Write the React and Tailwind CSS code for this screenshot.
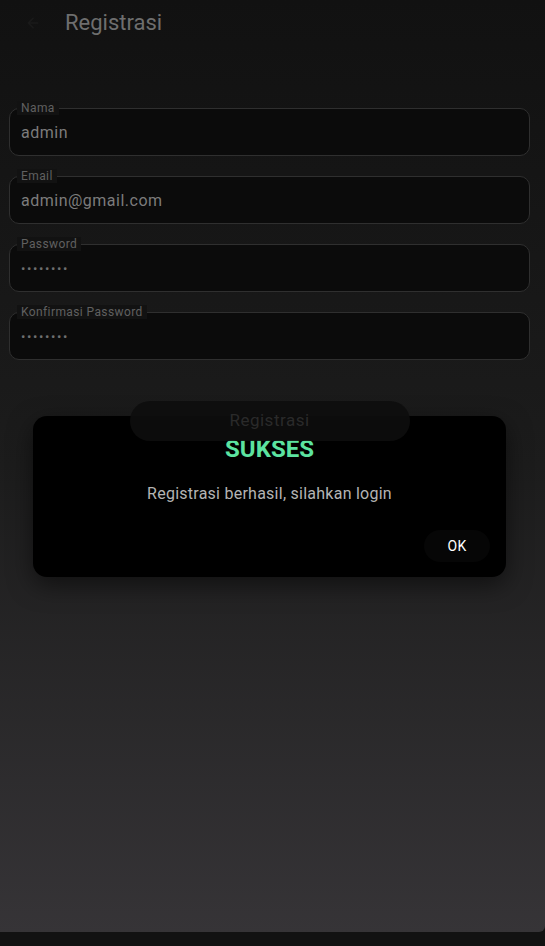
export default function App() {
  const fields = [
    { label: "Nama", value: "admin" },
    { label: "Email", value: "admin@gmail.com" },
    { label: "Password", value: "••••••••", pw: true },
    { label: "Konfirmasi Password", value: "••••••••", pw: true },
  ];
  return (
    <div className="relative w-[545px] h-[946px] bg-[#121212] overflow-hidden" style={{ fontFamily: "Roboto, 'Noto Sans', sans-serif" }}>
      <div className="h-[932px] bg-gradient-to-b from-[#111111] via-[#1c1c1c] to-[#363437] rounded-br-[6px] flex flex-col">
        <div className="h-[46px] flex items-center">
          <div className="w-[65px] flex justify-center">
            <svg width="16" height="16" viewBox="0 0 24 24" fill="none" stroke="#1a1a1a" strokeWidth="2.5" strokeLinecap="round" strokeLinejoin="round">
              <path d="M19 12H5M12 19l-7-7 7-7" />
            </svg>
          </div>
          <div className="text-[22px] text-[#6e6e6e] leading-none -mt-[1px]">Registrasi</div>
        </div>
        <div className="mt-[62px] px-[9px] flex flex-col gap-[20px] w-[539px]">
          {fields.map((f) => (
            <div key={f.label} className="relative h-[48px] rounded-[10px] border border-[#2f2f2f] bg-[#0b0b0b] flex items-center px-[11px]">
              <span className="absolute -top-[8px] left-[7px] px-[4px] text-[12px] tracking-[0.4px] leading-[14px] text-[#606060] bg-[#121212]">{f.label}</span>
              <span className={f.pw ? "text-[13px] tracking-[1.6px] text-[#6e6e6e] mt-[1px]" : "text-[16px] tracking-[0.5px] text-[#7c7c7c] mt-[2px]"}>{f.value}</span>
            </div>
          ))}
        </div>
        <div className="mt-[41px] flex justify-center relative z-20 -ml-[6px]">
          <div className="w-[280px] h-[40px] rounded-full bg-[#0d0d0d]/90 flex items-center justify-center text-[17px] tracking-[0.5px] text-[#2a2a2a]">Registrasi</div>
        </div>
      </div>
      <div className="absolute left-[33px] top-[416px] w-[473px] h-[161px] rounded-[14px] bg-black shadow-[0_8px_24px_rgba(0,0,0,0.5)] z-10 flex flex-col items-center">
        <div className="mt-[19px] text-[24px] font-bold text-[#5ce3a0] leading-[28px]">SUKSES</div>
        <div className="mt-[21px] text-[16px] tracking-[0.25px] text-[#b4b4b4] leading-[20px]">Registrasi berhasil, silahkan login</div>
        <div className="self-end mr-[16px] mt-[26px] w-[66px] h-[32px] rounded-full bg-[#060606] flex items-center justify-center text-[14px] tracking-[0.3px] font-normal text-white">OK</div>
      </div>
    </div>
  );
}
